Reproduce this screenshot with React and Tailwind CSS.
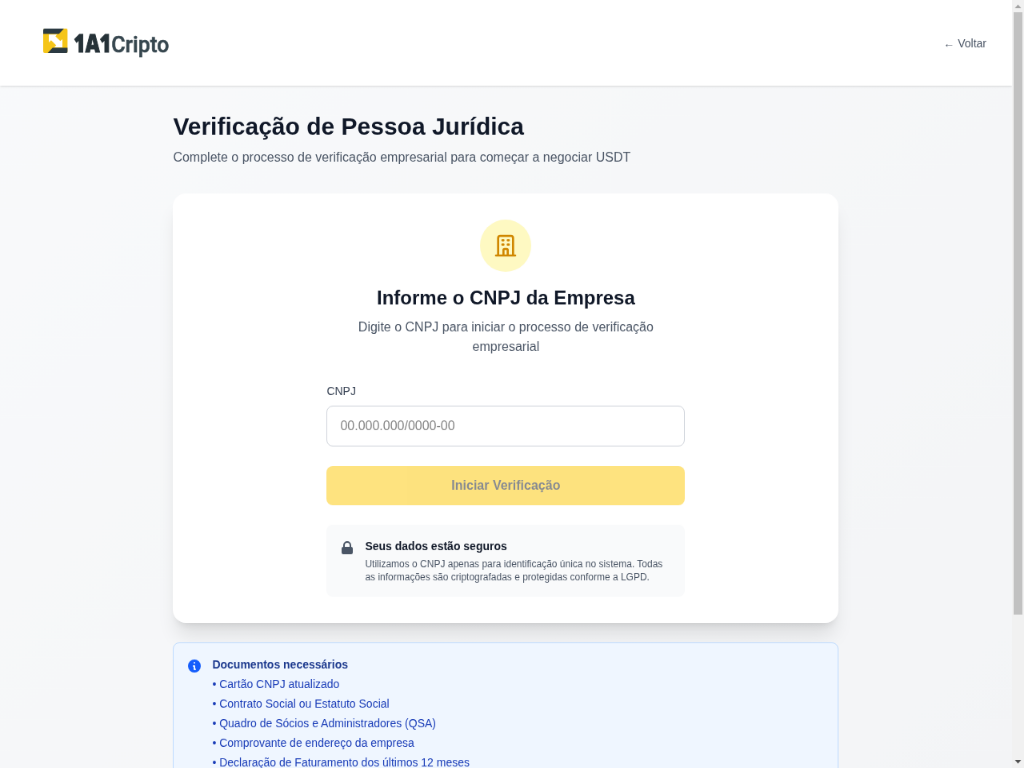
import React from "react";

const documents = [
  "Cartão CNPJ atualizado",
  "Contrato Social ou Estatuto Social",
  "Quadro de Sócios e Administradores (QSA)",
  "Comprovante de endereço da empresa",
  "Declaração de Faturamento dos últimos 12 meses",
];

function Logo() {
  return (
    <svg className="h-[40px] w-[160px] overflow-visible" viewBox="0 0 128 32.7" preserveAspectRatio="none" role="img" aria-label="1A1Cripto">
      <defs>
        <clipPath id="mark">
          <rect x="1.6" y="1.6" width="24.5" height="24.6" rx="1.6" />
        </clipPath>
      </defs>
      <g clipPath="url(#mark)">
        <rect x="1.6" y="1.6" width="24.5" height="24.6" fill="#f5c518" />
        <path d="M1.6 1.6H22.4L17.4 7H1.6Z" fill="#2b3a42" />
        <path d="M6 26.2L11 20.8H26.1V26.2Z" fill="#2b3a42" />
        <path d="M7.2 7.6H15.4L13.8 9.3L18.7 14.2L20.8 12.2V20.4H12.6L14.6 18.4L9.5 13.3L7.2 15.6Z" fill="#fff" />
      </g>
      <text x="32.2" y="25.6" textLength="37.4" lengthAdjust="spacingAndGlyphs" fill="#263238" stroke="#263238" strokeWidth="0.9" fontSize="24" fontWeight="800" fontFamily="'Open Sans', 'Noto Sans', sans-serif">1A1</text>
      <text x="69.8" y="25.6" textLength="57.6" lengthAdjust="spacingAndGlyphs" fill="#37474f" stroke="#37474f" strokeWidth="0.5" fontSize="22.8" fontWeight="500" fontFamily="Roboto, 'Open Sans', sans-serif">Cripto</text>
    </svg>
  );
}

function BuildingIcon() {
  return (
    <svg className="size-8 text-[#d08700]" fill="none" stroke="currentColor" viewBox="0 0 24 24">
      <path strokeLinecap="round" strokeLinejoin="round" strokeWidth="2" d="M19 21V5a2 2 0 00-2-2H7a2 2 0 00-2 2v16m14 0h2m-2 0h-5m-9 0H3m2 0h5M9 7h1m-1 4h1m4-4h1m-1 4h1m-5 10v-5a1 1 0 011-1h2a1 1 0 011 1v5m-4 0h4" />
    </svg>
  );
}

function LockIcon() {
  return (
    <svg className="mt-0.5 size-5 shrink-0 text-gray-600" fill="currentColor" viewBox="0 0 20 20">
      <path fillRule="evenodd" clipRule="evenodd" d="M5 9V7a5 5 0 0110 0v2a2 2 0 012 2v5a2 2 0 01-2 2H5a2 2 0 01-2-2v-5a2 2 0 012-2zm8-2v2H7V7a3 3 0 016 0z" />
    </svg>
  );
}

function InfoIcon() {
  return (
    <svg className="mt-0.5 size-5 shrink-0 text-blue-600" fill="currentColor" viewBox="0 0 20 20">
      <path fillRule="evenodd" clipRule="evenodd" d="M18 10a8 8 0 11-16 0 8 8 0 0116 0zm-7-4a1 1 0 11-2 0 1 1 0 012 0zM9 9a1 1 0 000 2v3a1 1 0 001 1h1a1 1 0 100-2v-3a1 1 0 00-1-1H9z" />
    </svg>
  );
}

function Scrollbar() {
  return (
    <div className="flex w-[15px] shrink-0 flex-col bg-[#f1f1f1]">
      <svg className="h-[15px] w-[15px]" viewBox="0 0 15 15">
        <path d="M3.5 10L7.5 5.5L11.5 10Z" fill="#a3a3a3" />
      </svg>
      <div className="mx-[2px] h-[738px] bg-[#c1c1c1]" />
      <svg className="mt-auto h-[15px] w-[15px]" viewBox="0 0 15 15">
        <path d="M3.5 5L7.5 9.5L11.5 5Z" fill="#505050" />
      </svg>
    </div>
  );
}

export default function App() {
  return (
    <div className="h-[768px] w-[1024px] overflow-hidden font-['Liberation_Sans',Arial,sans-serif]">
      <div className="flex h-[941px] w-[1280px] origin-top-left overflow-hidden will-change-transform [transform:scale(0.8,0.8162)]">
        <div className="h-[1159px] w-[1265px] shrink-0 bg-linear-to-br from-gray-50 to-gray-100">
          <header className="bg-white shadow-sm">
            <div className="flex h-[105px] items-center justify-between pr-8 pl-[52px]">
              <Logo />
              <a className="pt-px text-sm text-gray-600">← Voltar</a>
            </div>
          </header>
          <main className="ml-[184.4px] w-[896px] px-8 py-8">
            <div className="mb-8">
              <h1 className="mb-2 text-3xl font-bold text-gray-900">Verificação de Pessoa Jurídica</h1>
              <p className="text-gray-600">Complete o processo de verificação empresarial para começar a negociar USDT</p>
            </div>
            <section className="rounded-2xl bg-white p-8 shadow-xl">
              <div className="mx-auto max-w-md">
                <div className="mb-8 text-center">
                  <div className="mx-auto mb-4 flex size-16 items-center justify-center rounded-full bg-[#fef9c2]">
                    <BuildingIcon />
                  </div>
                  <h2 className="mb-2 text-2xl font-bold text-gray-900">Informe o CNPJ da Empresa</h2>
                  <p className="text-gray-600">Digite o CNPJ para iniciar o processo de verificação empresarial</p>
                </div>
                <label htmlFor="cnpj" className="mb-2 block text-sm font-medium text-gray-700">CNPJ</label>
                <input
                  id="cnpj"
                  type="text"
                  placeholder="00.000.000/0000-00"
                  className="block h-[50px] w-full rounded-lg border border-gray-300 bg-white px-4 text-base placeholder:text-[#858585]"
                />
                <button disabled className="mt-6 block h-12 w-full rounded-lg bg-[#fdc700] font-semibold text-gray-900 opacity-50">
                  Iniciar Verificação
                </button>
                <div className="mt-6 flex gap-3 rounded-lg bg-gray-50 p-4">
                  <LockIcon />
                  <div>
                    <p className="mb-1 text-sm font-semibold text-gray-900">Seus dados estão seguros</p>
                    <p className="text-xs text-gray-600">
                      Utilizamos o CNPJ apenas para identificação única no sistema. Todas as informações são criptografadas e protegidas conforme a LGPD.
                    </p>
                  </div>
                </div>
              </div>
            </section>
            <section className="mt-6 flex gap-3 rounded-lg border border-blue-200 bg-blue-50 p-4">
              <InfoIcon />
              <div>
                <h3 className="mb-1 text-sm font-semibold text-blue-900">Documentos necessários</h3>
                <ul className="space-y-1 text-sm text-blue-800">
                  {documents.map((item) => (
                    <li key={item}>• {item}</li>
                  ))}
                </ul>
              </div>
            </section>
          </main>
        </div>
        <Scrollbar />
      </div>
    </div>
  );
}
